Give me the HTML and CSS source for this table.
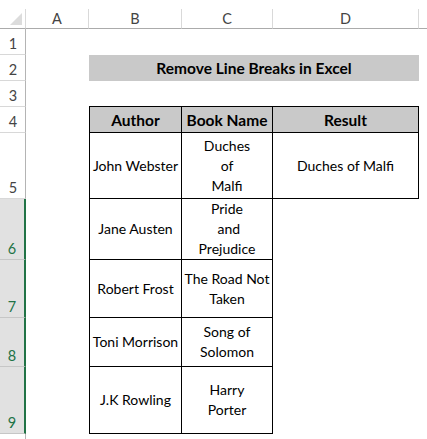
FILE: index.html
```html
<!DOCTYPE html>
<html>
<head>
<meta charset="utf-8">
<link rel="stylesheet" href="styles.css">
</head>
<body>
<div class="sheet">
  <div class="topgap"></div>

  <div class="ch corner"><span class="tri"></span></div>
  <div class="ch">A</div>
  <div class="ch">B</div>
  <div class="ch">C</div>
  <div class="ch">D</div>
  <div class="ch rest"></div>

  <div class="rh">1</div>
  <div class="blank span5"></div>

  <div class="rh">2</div>
  <div class="blank"></div>
  <div class="title span3">Remove Line Breaks in Excel</div>
  <div class="blank"></div>

  <div class="rh">3</div>
  <div class="blank span5"></div>

  <div class="rh">4</div>
  <div class="blank"></div>
  <div class="t tl tt head">Author</div>
  <div class="t tt head">Book Name</div>
  <div class="t tt head">Result</div>
  <div class="blank"></div>

  <div class="rh">5</div>
  <div class="blank"></div>
  <div class="t tl">John Webster</div>
  <div class="t">Duches<br>of<br>Malfi</div>
  <div class="t">Duches of Malfi</div>
  <div class="blank"></div>

  <div class="rh sel">6</div>
  <div class="blank"></div>
  <div class="t tl">Jane Austen</div>
  <div class="t">Pride<br>&nbsp;and<br>Prejudice</div>
  <div class="blank span2"></div>

  <div class="rh sel">7</div>
  <div class="blank"></div>
  <div class="t tl">Robert Frost</div>
  <div class="t">The Road Not<br>Taken</div>
  <div class="blank span2"></div>

  <div class="rh sel">8</div>
  <div class="blank"></div>
  <div class="t tl">Toni Morrison</div>
  <div class="t">Song of<br>Solomon</div>
  <div class="blank span2"></div>

  <div class="rh sel">9</div>
  <div class="blank"></div>
  <div class="t tl">J.K Rowling</div>
  <div class="t">Harry<br>Porter</div>
  <div class="blank span2"></div>

  <div class="rh end"></div>
  <div class="blank span5"></div>
</div>
</body>
</html>
```

FILE: styles.css
```css
html, body {
  margin: 0;
  padding: 0;
  background: #ffffff;
}

.sheet {
  width: 427px;
  height: 439px;
  display: grid;
  grid-template-columns: 26px 63px 93px 91px 146px 1fr;
  grid-template-rows: 9px 20px 26px 26px 26px 26px 66px 61px 58px 49px 67px 1fr;
  font-family: "Lato", "Open Sans", sans-serif;
  font-size: 14px;
  color: #000000;
  overflow: hidden;
}

.topgap {
  grid-column: 1 / -1;
}

.span5 { grid-column: span 5; }
.span3 { grid-column: span 3; }
.span2 { grid-column: span 2; }

.ch {
  box-sizing: border-box;
  border-bottom: 1px solid #ababab;
  border-right: 1px solid #d9d9d9;
  display: flex;
  align-items: center;
  justify-content: center;
  color: #444444;
  font-size: 14.5px;
}

.ch.rest {
  border-right: none;
}

.corner {
  position: relative;
}

.tri {
  position: absolute;
  left: 10px;
  top: 4px;
  width: 0;
  height: 0;
  border-left: 12px solid transparent;
  border-bottom: 12px solid #dcdcdc;
}

.rh {
  box-sizing: border-box;
  border-right: 1px solid #b4b4b4;
  border-bottom: 1px solid #d8d8d8;
  display: flex;
  align-items: flex-end;
  justify-content: center;
  color: #444444;
  font-size: 14.5px;
  line-height: 17px;
  padding-bottom: 2px;
  padding-left: 1px;
}

.rh.sel {
  background: #e1e1e1;
  color: #217346;
  border-right: 2px solid #217346;
  border-bottom-color: #c6c6c6;
  padding-left: 0;
}

.rh.end {
  border-bottom: none;
}

.title {
  background: #c9c9c9;
  display: flex;
  align-items: center;
  justify-content: center;
  font-weight: 700;
  font-size: 15.5px;
  color: #000000;
}

.t {
  box-sizing: border-box;
  border-right: 1px solid #000000;
  border-bottom: 1px solid #000000;
  display: flex;
  align-items: center;
  justify-content: center;
  text-align: center;
  line-height: 20px;
}

.tl {
  border-left: 1px solid #000000;
}

.tt {
  border-top: 1px solid #000000;
  margin-top: -1px;
}

.head {
  background: #c9c9c9;
  font-weight: 700;
  font-size: 15.5px;
  color: #000000;
}
```
